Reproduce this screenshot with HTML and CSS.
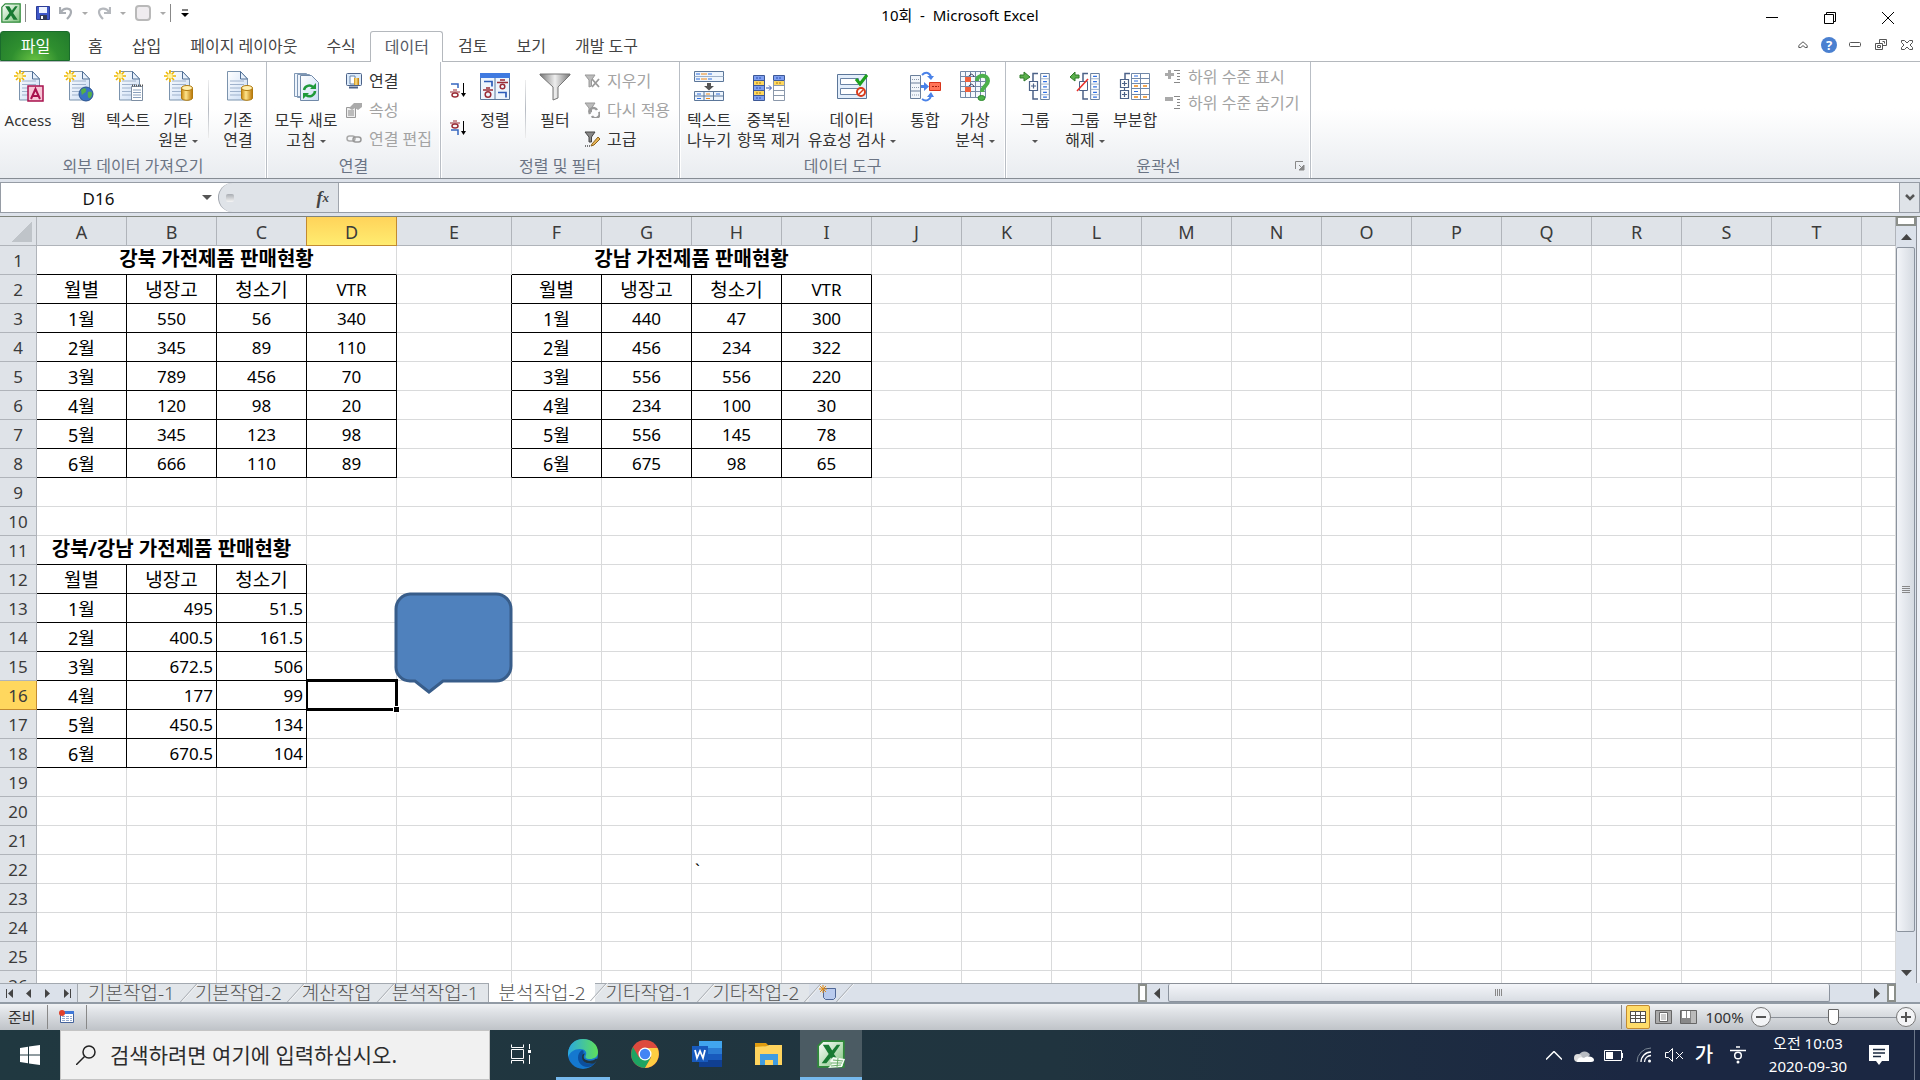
FILE: index.html
```html
<!DOCTYPE html>
<html lang="ko">
<head>
<meta charset="utf-8">
<title>10회 - Microsoft Excel</title>
<link rel="stylesheet" href="styles.css">
</head>
<body>
<svg class="defs" aria-hidden="true">
  <defs>
    <linearGradient id="paper" x1="0" y1="0" x2="1" y2="1"><stop offset="0" stop-color="#fff"/><stop offset="1" stop-color="#c9dcf5"/></linearGradient>
    <linearGradient id="gold" x1="0" x2="1"><stop offset="0" stop-color="#c8860c"/><stop offset=".4" stop-color="#ffe48a"/><stop offset="1" stop-color="#b87404"/></linearGradient>
    <linearGradient id="metal" x1="0" x2="1"><stop offset="0" stop-color="#777"/><stop offset=".5" stop-color="#eee"/><stop offset="1" stop-color="#777"/></linearGradient>
    <linearGradient id="edgeTop" x1="0" x2="1"><stop offset="0" stop-color="#2aa8e0"/><stop offset="1" stop-color="#5fe05a"/></linearGradient>
    <linearGradient id="xl" x1="0" y1="0" x2="1" y2="1"><stop offset="0" stop-color="#fff"/><stop offset="1" stop-color="#7fc27d"/></linearGradient>
    <symbol id="page" viewBox="0 0 32 32"><path d="M7.500 1.500h13l7 7.500v21h-20z" fill="url(#paper)" stroke="#7b93ad"/><path d="M20.500 1.500v7.500h7z" fill="#e8f1fc" stroke="#506f95"/><path d="M10 11h14M10 14.500h14M10 18h14M10 21.500h14M10 25h14" stroke="#9fb2cc"/></symbol>
    <symbol id="spark" viewBox="0 0 12 12"><path d="M6 0v12M0 6h12M2 2l8 8M10 2l-8 8" stroke="#f0b800" stroke-width="1.600"/><circle cx="6" cy="6" r="2.500" fill="#fff3a0"/></symbol>
    <symbol id="drum" viewBox="0 0 12 16"><path d="M.5 3v10c0 3 11 3 11 0V3z" fill="url(#gold)" stroke="#b07a10"/><ellipse cx="6" cy="3" rx="5.500" ry="2.500" fill="#ffefb0" stroke="#b07a10"/></symbol>
    <symbol id="list" viewBox="0 0 10 28"><path d="M.5.5h9v27h-9z" fill="#fff" stroke="#5f7899"/><path d="M.5 6h9M.5 11.500h9M.5 17h9M.5 22.500h9" stroke="#9db0c8"/><path d="M3 3.500h4M3 9h4M3 14.500h4M3 20h4M3 25h4" stroke="#2f6fe0" stroke-width="1.300"/></symbol>
    <symbol id="excel" viewBox="0 0 24 24"><path d="M5 1h18v22H1V5z" fill="url(#xl)" stroke="#2f8a3a" stroke-width="1.500"/><path d="M5 4l5 0 3 5 4-5h3l-5.500 8L20 20h-5l-3-5-4 5H4l6-8z" fill="#187a32"/></symbol>
  </defs>
</svg>

<header class="titlebar">
  <div class="quick">
    <svg class="i20" aria-hidden="true"><use href="#excel"/></svg>
    <span class="bar"></span>
    <button aria-label="저장"><svg width="14" height="14"><path d="M.5.5h13v13h-13z" fill="#3f58c8" stroke="#2c3c96"/><path d="M3 1h8v6H3z" fill="#eef3ff"/><path d="M4 9h7v5H4z" fill="#333a55"/><path d="M5 10h2v3H5z" fill="#fff"/></svg></button>
    <button class="dim" aria-label="실행 취소"><svg width="14" height="14"><path d="M1 1v6h6M2 6c3-5 10-4 10 0 0 3-2 5-4 7" fill="none" stroke="#a9adb3" stroke-width="2.200"/></svg><i class="caret"></i></button>
    <button class="dim" aria-label="다시 실행"><svg width="14" height="14"><path d="M13 1v6H7M12 6C9 1 2 2 2 6c0 3 2 5 4 7" fill="none" stroke="#b5b8bd" stroke-width="2.200"/></svg><i class="caret"></i></button>
    <button class="dim" aria-label="도형"><svg width="16" height="16"><rect x="1" y="1" width="14" height="14" rx="3" fill="#efecef" stroke="#b9b9b9" stroke-width="2"/></svg><i class="caret"></i></button>
    <span class="bar"></span>
    <button aria-label="사용자 지정"><svg width="8" height="8"><path d="M1 1h6" stroke="#000"/><path d="M0 4h8L4 8z"/></svg></button>
  </div>
  <h1>10회  -  Microsoft Excel</h1>
  <div class="winbtns">
    <button aria-label="최소화"><svg width="12" height="12"><path d="M0 5.500h12" stroke="#000"/></svg></button>
    <button aria-label="이전 크기로"><svg width="12" height="12"><path d="M.5 2.500h9v9h-9zM2.500 2.500v-2h9v9h-2" fill="none" stroke="#000"/></svg></button>
    <button aria-label="닫기"><svg width="12" height="12"><path d="M0 0l12 12M12 0L0 12" stroke="#000"/></svg></button>
  </div>
</header>

<nav class="tabs">
  <button class="file">파일</button>
  <button>홈</button><button>삽입</button><button>페이지 레이아웃</button><button>수식</button><button class="on">데이터</button><button>검토</button><button>보기</button><button>개발 도구</button>
  <div class="tabright">
    <button aria-label="리본 최소화"><svg width="10" height="8"><path d="M5 .8L.8 4.500v2h2L5 4.600l2.200 1.900h2v-2z" fill="none" stroke="#555"/></svg></button>
    <button class="help" aria-label="도움말">?</button>
    <button aria-label="창 최소화"><svg width="12" height="6"><rect x=".5" y=".5" width="11" height="4" rx="1" fill="none" stroke="#555"/></svg></button>
    <button aria-label="창 복원"><svg width="12" height="12"><path d="M.5 4.500h7v6h-7zM2.500 6.500h3v2h-3zM4.500 4.500v-4h7v6h-4M7.500 2.500h2v2" fill="none" stroke="#555"/></svg></button>
    <button aria-label="창 닫기"><svg width="12" height="10"><path d="M.5.5h3L6 3l2.500-2.500h3v2L9 5l2.500 2.500v2h-3L6 7 3.500 9.500h-3v-2L3 5 .5 2.500z" fill="none" stroke="#555"/></svg></button>
  </div>
</nav>

<section class="ribbon" aria-label="데이터">
  <div class="group">
    <div class="tools">
      <button class="big latin"><svg class="i32"><use href="#page" width="32" height="32"/><use href="#spark" x="2" width="12" height="12"/><rect x="16" y="16" width="15" height="15" fill="#f7c6d6" stroke="#a8104c" stroke-width="1.500"/><path d="M19 29l4.500-10L28 29M20.500 26h6" fill="none" stroke="#a8104c" stroke-width="2"/></svg><span>Access</span></button>
      <button class="big"><svg class="i32"><use href="#page" width="32" height="32"/><use href="#spark" x="2" width="12" height="12"/><circle cx="24" cy="24" r="7" fill="#3a72c4" stroke="#2b548e"/><path d="M19 20c3-3 6-2 5 1s-4 2-4 5zM26 22c4-2 5 2 3 5s-4 0-3-5z" fill="#55b047"/></svg><span>웹</span></button>
      <button class="big"><svg class="i32"><use href="#page" width="32" height="32"/><use href="#spark" x="2" width="12" height="12"/><path d="M19.500 16.500h11v14h-11z" fill="#fff" stroke="#7d8ea3"/><path d="M21 20h8M21 22.500h8M21 25h8M21 27.500h8" stroke="#8aa0bd"/><path d="M20 15.500h11" stroke="#555" stroke-dasharray="1 1" stroke-width="2"/></svg><span>텍스트</span></button>
      <button class="big"><svg class="i32"><use href="#page" width="32" height="32"/><use href="#spark" x="2" width="12" height="12"/><use href="#drum" x="19" y="15" width="12" height="16"/></svg><span>기타<br>원본 <i class="caret"></i></span></button>
      <span class="split"></span>
      <button class="big"><svg class="i32"><use href="#page" x="-2" width="32" height="32"/><use href="#drum" x="19" y="15" width="12" height="16"/></svg><span>기존<br>연결</span></button>
    </div>
    <h2>외부 데이터 가져오기</h2>
  </div>
  <div class="group">
    <div class="tools">
      <button class="big w72"><svg class="i32"><path d="M4.500 3.500h12v23h-12zM7.500 4.500h12v23h-12z" fill="#eef4fc" stroke="#8098b5"/><path d="M10.500 5.500h11l7 7v18h-18z" fill="url(#paper)" stroke="#7089a8"/><path d="M14 20a5.500 5.500 0 0 1 9-3M25 21a5.500 5.500 0 0 1-9 4" fill="none" stroke="#1f9a3a" stroke-width="2.500"/><path d="M26 13v6h-6zM13 29v-6h6z" fill="#1f9a3a"/></svg><span>모두 새로<br>고침 <i class="caret"></i></span></button>
      <div class="stack">
        <button class="small"><svg class="i16"><rect x=".5" y=".5" width="15" height="12" rx="1" fill="#dcebfb" stroke="#4c6288"/><path d="M4 3h5v8H4z" fill="#fff" stroke="#6784aa"/><rect x="8" y="5" width="5" height="7" fill="url(#gold)"/><path d="M3 14.500h9" stroke="#4c6288" stroke-width="2"/></svg>연결</button>
        <button class="small" disabled><svg class="i16"><path d="M.5 5.500h9v10h-9z" fill="#eee" stroke="#999"/><path d="M2 9h6M2 11h6M2 13h6" stroke="#888"/><path d="M3 6l5-5h8v4l-4 3-3-2-3 2z" fill="#aaa"/></svg>속성</button>
        <button class="small" disabled><svg class="i16"><rect x="1" y="5" width="8" height="5" rx="2.500" fill="none" stroke="#aaa" stroke-width="1.500"/><rect x="7" y="6" width="8" height="5" rx="2.500" fill="none" stroke="#999" stroke-width="1.500"/></svg>연결 편집</button>
      </div>
    </div>
    <h2>연결</h2>
  </div>
  <div class="group">
    <div class="tools">
      <div class="stack sorts">
        <button aria-label="오름차순 정렬"><svg class="i16"><path d="M1 2h7v4" fill="none" stroke="#3565c0" stroke-width="1.500"/><path d="M3 8h4M0 10h10" stroke="#9a2b35"/><ellipse cx="5" cy="13" rx="3" ry="2" fill="none" stroke="#9a2b35" stroke-width="1.500"/><path d="M13.500 1v12" stroke="#000"/><path d="M11 11h5l-2.500 4z"/></svg></button>
        <button aria-label="내림차순 정렬"><svg class="i16"><path d="M3 1h4M0 3h10" stroke="#9a2b35"/><ellipse cx="5" cy="6" rx="3" ry="2" fill="none" stroke="#9a2b35" stroke-width="1.500"/><path d="M1 10h7v5" fill="none" stroke="#3565c0" stroke-width="1.500"/><path d="M13.500 1v12" stroke="#000"/><path d="M11 11h5l-2.500 4z"/></svg></button>
      </div>
      <button class="big"><svg class="i32"><path d="M1.500 3.500h29v26h-29z" fill="#eef5fd" stroke="#5b7699"/><path d="M1 3h30v5H1z" fill="#3f7ae0"/><path d="M16 8v21" stroke="#5b7699"/><path d="M5 11.500h8v5M19 22.500h8v5" fill="none" stroke="#2d5cb8" stroke-width="1.700"/><path d="M7 18h4M4 20h10M21 10h5M18 12.500h11" stroke="#9a2b35" stroke-width="1.500"/><circle cx="9" cy="24.500" r="2.800" fill="none" stroke="#9a2b35" stroke-width="1.500"/><circle cx="23.500" cy="16.500" r="2.300" fill="none" stroke="#9a2b35" stroke-width="1.500"/></svg><span>정렬</span></button>
      <span class="split"></span>
      <button class="big"><svg class="i32"><path d="M1 4h30v1L19 17v11l-5 2V17L1 5z" fill="url(#metal)" stroke="#777"/></svg><span>필터</span></button>
      <div class="stack wide">
        <button class="small" disabled><svg class="i16"><path d="M1 2h10L7.500 7v6L5 14V7z" fill="#bbb" stroke="#999"/><path d="M8 6l7 8M15 6l-7 8" stroke="#999" stroke-width="1.800"/></svg>지우기</button>
        <button class="small" disabled><svg class="i16"><path d="M1 1h10L7.500 6v4H5V6z" fill="#bbb" stroke="#999"/><path d="M6 12a4 4 0 0 1 7-4M15 10a4 4 0 0 1-7 4" fill="none" stroke="#999" stroke-width="2.500"/></svg>다시 적용</button>
        <button class="small"><svg class="i16"><path d="M1 1h10L7.500 6v5H5V6z" fill="#888" stroke="#444"/><path d="M1 15h6" stroke="#000" stroke-dasharray="1 1"/><path d="M8 13l6-7 2 2-6 6-3 1z" fill="#e8b455" stroke="#8a6420"/></svg>고급</button>
      </div>
    </div>
    <h2>정렬 및 필터</h2>
  </div>
  <div class="group">
    <div class="tools spread">
      <button class="big"><svg class="i32"><path d="M1.500 1.500h29v10h-29z" fill="#eef5fd" stroke="#5b7699"/><path d="M1.500 6.500h29" stroke="#9db0c8"/><path d="M3 4h4M15 4h4M3 9h4M15 9h4" stroke="#2f6fe0"/><path d="M8 4h6M8 9h6" stroke="#f08a1a"/><path d="M14 13h4v3h3l-5 4.500-5-4.500h3z" fill="#555"/><path d="M1.500 21.500h29v9h-29zM11 21.500v9M20.500 21.500v9M1.500 26h29" fill="#eef5fd" stroke="#5b7699"/><path d="M4 24h4M4 28.500h4M23 24h4" stroke="#2f6fe0"/><path d="M13 24h4M13 28.500h4" stroke="#f08a1a"/></svg><span>텍스트<br>나누기</span></button>
      <button class="big w69"><svg class="i32"><path d="M.5 5.500h11v25H.5zM20.500 5.500h11v5h-11z" fill="#7f9ff0" stroke="#3c5896"/><path d="M1 11h10v4H1zM1 21h10v4H1zM21 11h10v4H21z" fill="#ffd75e"/><path d="M.5 10.500h11M.5 15.500h11M.5 20.500h11M.5 25.500h11" stroke="#3c5896"/><path d="M20.500 10.500v20h11v-20M20.500 15.500h11M20.500 20.500h11M20.500 25.500h11" fill="none" stroke="#8b98ab"/><path d="M3 8h6M3 18h6M3 28h6M23 8h6" stroke="#2b4fae" stroke-dasharray="2 1"/><path d="M3 13h6M3 23h6M23 13h6" stroke="#a87a10" stroke-dasharray="2 1"/><path d="M13 18h5M16 15.500l2.500 2.500-2.500 2.500" fill="none" stroke="#2b4fae"/></svg><span>중복된<br>항목 제거</span></button>
      <button class="big w97"><svg class="i32"><path d="M1.500 4.500h29v24h-29z" fill="#e3eefb" stroke="#5b7699"/><path d="M4.500 8.500h18v6h-18zM4.500 18.500h18v6h-18z" fill="#fff" stroke="#6a83a5"/><path d="M20 9l4 5 7-9" fill="none" stroke="#1ca01c" stroke-width="3"/><circle cx="25" cy="22" r="4" fill="#fff" stroke="#d83a1a" stroke-width="2"/><path d="M22.500 24.500l5-5" stroke="#d83a1a" stroke-width="1.500"/></svg><span>데이터<br>유효성 검사 <i class="caret"></i></span></button>
      <button class="big"><svg class="i32"><path d="M1.500 5.500h10v23h-10zM1.500 13h10M1.500 21h10" fill="#f2f6fb" stroke="#6a7f9b"/><path d="M3 9.500h7M3 17.500h7M3 25h7" stroke="#8b98ab" stroke-dasharray="1 1"/><path d="M12 15h3v-3l5 4.500-5 4.500v-3h-3z" fill="#4a82e8"/><path d="M13 5c4-4 8-2 9 2M13 29c4 3 8 1 9-3" fill="none" stroke="#4a82e8" stroke-width="2"/><path d="M18 6h7l-3 4zM18 27h7l-3-5z" fill="#4a82e8"/><path d="M20.500 12.500h11v8h-11z" fill="#ff7558" stroke="#d8341a"/><path d="M23 16.500h7" stroke="#a02010" stroke-dasharray="2 1"/></svg><span>통합</span></button>
      <button class="big"><svg class="i32"><path d="M1.500 1.500h25v26h-25zM6.500 1.500v26M11.500 1.500v26M16.500 1.500v26M21.500 1.500v26M1.500 6.500h25M1.500 11.500h25M1.500 16.500h25M1.500 21.500h25" fill="#f4f8fd" stroke="#7489a5"/><path d="M6 7h6v5H6zM6 17h6v5H6z" fill="#f0603c"/><path d="M10 6c2-3 4-2 5 1M10 16c2-3 4-2 5 1" fill="none" stroke="#335"/><path d="M18 11c0-7 11-7 11 0 0 5-6 5-6 11" fill="none" stroke="#4cb04c" stroke-width="4"/><ellipse cx="22.500" cy="28" rx="3.500" ry="2.500" fill="#4cb04c" stroke="#2a8a2a"/></svg><span>가상<br>분석 <i class="caret"></i></span></button>
    </div>
    <h2>데이터 도구</h2>
  </div>
  <div class="group">
    <div class="tools spread">
      <button class="big"><svg class="i32"><path d="M1 5h4V2l6 5-6 4V8H1z" fill="#5bb04c" stroke="#2f7a28"/><path d="M19 3.500h-5v8M14 20v9h5" fill="none" stroke="#4c6288" stroke-width="1.500"/><path d="M10.500 11.500h8v9h-8zM12 16h5M14.500 13.500v5" fill="#fff" stroke="#4c6288" stroke-width="1.200"/><use href="#list" x="21" y="3" width="10" height="27"/></svg><span>그룹<br><i class="caret"></i></span></button>
      <button class="big"><svg class="i32"><path d="M10 5H6V2L1 7l5 4V8h4z" fill="#5bb04c" stroke="#2f7a28"/><path d="M19 3.500h-5v8M14 20v9h5" fill="none" stroke="#4c6288" stroke-width="1.500"/><path d="M10.500 11.500h8v9h-8z" fill="#fff" stroke="#4c6288"/><path d="M8 21L19 9" stroke="#e8302a" stroke-width="1.600"/><use href="#list" x="21" y="3" width="10" height="27"/></svg><span>그룹<br>해제 <i class="caret"></i></span></button>
      <button class="big"><svg class="i32"><path d="M11 3.500H6v6" fill="none" stroke="#4c6288" stroke-width="1.500"/><path d="M1.500 9.500h8v8h-8zM1.500 20.500h8v8h-8zM3 13.500h5M5.500 11v5M3 24.500h5M5.500 22v5M5.500 17.500v3" fill="#fff" stroke="#4c6288" stroke-width="1.200"/><path d="M12.500 3.500h18v26h-18zM21.500 3.500v26M12.500 8.500h18M12.500 13.500h18M12.500 18.500h18M12.500 24.500h18" fill="#fff" stroke="#7188a8"/><path d="M15 6h4M15 11h4M15 21.500h4" stroke="#2f6fe0"/><path d="M15 16h4M24 16h4M15 27h4M24 27h4" stroke="#f08a1a" stroke-width="1.500"/></svg><span>부분합</span></button>
      <div class="stack tight">
        <button class="small" disabled><svg class="i16"><path d="M3 1h3v3h3v3H6v3H3V7H0V4h3z" fill="#aaa"/><path d="M9 1.500h6M12 4.500h3M12 7.500h3M12 10.500h3M9 13.500h6" stroke="#888"/></svg>하위 수준 표시</button>
        <button class="small" disabled><svg class="i16"><path d="M0 2h8v4H0z" fill="#aaa"/><path d="M9 1.500h6M12 4.500h3M12 7.500h3M12 10.500h3M9 13.500h6" stroke="#888"/></svg>하위 수준 숨기기</button>
      </div>
    </div>
    <h2>윤곽선</h2>
    <button class="launch" aria-label="윤곽선 설정"><svg width="10" height="10"><path d="M.5 8V.5H8" fill="none" stroke="#888"/><path d="M4 4l3 3M9 4v5H4z" fill="#888" stroke="#888"/></svg></button>
  </div>
</section>

<section class="formula">
  <div class="fbox">
    <input class="name" aria-label="이름 상자" value="D16">
    <button class="drop" aria-label="이름 목록"><i class="caret wide"></i></button>
    <div class="fxzone"><span class="knob"></span><button class="fx" aria-label="함수 삽입">f<sub>x</sub></button></div>
    <input class="fin" aria-label="수식 입력줄">
    <button class="expand" aria-label="수식 입력줄 확장"><svg width="10" height="7"><path d="M1 1l4 4 4-4" fill="none" stroke="#555" stroke-width="2.500"/></svg></button>
  </div>
</section>

<main class="work">
  <div class="sheet">
    <table>
      <colgroup><col class="rowcol"><col><col><col><col><col class="ecol"><col><col><col><col><col><col><col><col><col><col><col><col><col><col><col><col class="rest"></colgroup>
      <thead><tr><th class="corner"></th><th>A<th>B<th>C<th class="sel">D<th>E<th>F<th>G<th>H<th>I<th>J<th>K<th>L<th>M<th>N<th>O<th>P<th>Q<th>R<th>S<th>T<th></tr></thead>
      <tbody>
      <tr><th>1<td class="cap" colspan="4">강북 가전제품 판매현황<td><td class="cap" colspan="4">강남 가전제품 판매현황<td><td><td><td><td><td><td><td><td><td><td><td></tr>
      <tr class="head"><th>2<td class="b">월별<td class="b">냉장고<td class="b">청소기<td class="b l">VTR<td class="br"><td class="b">월별<td class="b">냉장고<td class="b">청소기<td class="b l">VTR<td><td><td><td><td><td><td><td><td><td><td><td></tr>
      <tr><th>3<td class="b m">1월<td class="b">550<td class="b">56<td class="b">340<td class="br"><td class="b m">1월<td class="b">440<td class="b">47<td class="b">300<td><td><td><td><td><td><td><td><td><td><td><td></tr>
      <tr><th>4<td class="b m">2월<td class="b">345<td class="b">89<td class="b">110<td class="br"><td class="b m">2월<td class="b">456<td class="b">234<td class="b">322<td><td><td><td><td><td><td><td><td><td><td><td></tr>
      <tr><th>5<td class="b m">3월<td class="b">789<td class="b">456<td class="b">70<td class="br"><td class="b m">3월<td class="b">556<td class="b">556<td class="b">220<td><td><td><td><td><td><td><td><td><td><td><td></tr>
      <tr><th>6<td class="b m">4월<td class="b">120<td class="b">98<td class="b">20<td class="br"><td class="b m">4월<td class="b">234<td class="b">100<td class="b">30<td><td><td><td><td><td><td><td><td><td><td><td></tr>
      <tr><th>7<td class="b m">5월<td class="b">345<td class="b">123<td class="b">98<td class="br"><td class="b m">5월<td class="b">556<td class="b">145<td class="b">78<td><td><td><td><td><td><td><td><td><td><td><td></tr>
      <tr><th>8<td class="b m">6월<td class="b">666<td class="b">110<td class="b">89<td class="br"><td class="b m">6월<td class="b">675<td class="b">98<td class="b">65<td><td><td><td><td><td><td><td><td><td><td><td></tr>
      <tr><th>9<td><td><td><td><td><td><td><td><td><td><td><td><td><td><td><td><td><td><td><td><td></tr>
      <tr><th>10<td><td><td><td><td><td><td><td><td><td><td><td><td><td><td><td><td><td><td><td><td></tr>
      <tr><th>11<td class="cap" colspan="3">강북/강남 가전제품 판매현황<td><td><td><td><td><td><td><td><td><td><td><td><td><td><td><td><td><td></tr>
      <tr class="head"><th>12<td class="b">월별<td class="b">냉장고<td class="b">청소기<td><td><td><td><td><td><td><td><td><td><td><td><td><td><td><td><td><td></tr>
      <tr><th>13<td class="b m">1월<td class="b r">495<td class="b r">51.5<td><td><td><td><td><td><td><td><td><td><td><td><td><td><td><td><td><td></tr>
      <tr><th>14<td class="b m">2월<td class="b r">400.5<td class="b r">161.5<td><td><td><td><td><td><td><td><td><td><td><td><td><td><td><td><td><td></tr>
      <tr><th>15<td class="b m">3월<td class="b r">672.5<td class="b r">506<td><td><td><td><td><td><td><td><td><td><td><td><td><td><td><td><td><td></tr>
      <tr><th class="sel">16<td class="b m">4월<td class="b r">177<td class="b r">99<td class="active"><td><td><td><td><td><td><td><td><td><td><td><td><td><td><td><td><td></tr>
      <tr><th>17<td class="b m">5월<td class="b r">450.5<td class="b r">134<td><td><td><td><td><td><td><td><td><td><td><td><td><td><td><td><td><td></tr>
      <tr><th>18<td class="b m">6월<td class="b r">670.5<td class="b r">104<td><td><td><td><td><td><td><td><td><td><td><td><td><td><td><td><td><td></tr>
      <tr><th>19<td><td><td><td><td><td><td><td><td><td><td><td><td><td><td><td><td><td><td><td><td></tr>
      <tr><th>20<td><td><td><td><td><td><td><td><td><td><td><td><td><td><td><td><td><td><td><td><td></tr>
      <tr><th>21<td><td><td><td><td><td><td><td><td><td><td><td><td><td><td><td><td><td><td><td><td></tr>
      <tr><th>22<td><td><td><td><td><td><td><td class="left">`<td><td><td><td><td><td><td><td><td><td><td><td><td></tr>
      <tr><th>23<td><td><td><td><td><td><td><td><td><td><td><td><td><td><td><td><td><td><td><td><td></tr>
      <tr><th>24<td><td><td><td><td><td><td><td><td><td><td><td><td><td><td><td><td><td><td><td><td></tr>
      <tr><th>25<td><td><td><td><td><td><td><td><td><td><td><td><td><td><td><td><td><td><td><td><td></tr>
      <tr><th>26<td><td><td><td><td><td><td><td><td><td><td><td><td><td><td><td><td><td><td><td><td></tr>
      </tbody>
    </table>
    <svg class="callout" width="120" height="104" aria-hidden="true"><path d="M16 2h86a15 15 0 0 1 15 15v57a15 15 0 0 1-15 15H49L35 100 21 89h-5A14 14 0 0 1 2 74V17A15 15 0 0 1 16 2z" fill="#4f81bd" stroke="#385d8a" stroke-width="3"/></svg>
  </div>
  <div class="vscroll">
    <span class="vsplit"></span>
    <button aria-label="위로"><svg width="11" height="6"><path d="M5.500 0L11 6H0z" fill="#444"/></svg></button>
    <div class="vthumb"><i></i><i></i><i></i><i></i></div>
    <div class="vrest"></div>
    <button aria-label="아래로"><svg width="11" height="6"><path d="M0 0h11L5.500 6z" fill="#444"/></svg></button>
  </div>
</main>

<div class="strip">
  <nav class="sheets">
    <div class="navs">
      <button aria-label="첫 시트"><svg width="8" height="9"><path d="M.5 0v9" stroke="#444"/><path d="M7 0v9L2 4.500z" fill="#444"/></svg></button>
      <button aria-label="이전 시트"><svg width="8" height="9"><path d="M6 0v9L1 4.500z" fill="#444"/></svg></button>
      <button aria-label="다음 시트"><svg width="8" height="9"><path d="M1 0v9l5-4.500z" fill="#444"/></svg></button>
      <button aria-label="마지막 시트"><svg width="8" height="9"><path d="M7.500 0v9" stroke="#444"/><path d="M1 0v9l5-4.500z" fill="#444"/></svg></button>
    </div>
    <button class="tab">기본작업-1</button><button class="tab">기본작업-2</button><button class="tab">계산작업</button><button class="tab before">분석작업-1</button><button class="tab now">분석작업-2</button><button class="tab">기타작업-1</button><button class="tab">기타작업-2</button>
    <button class="tab new" aria-label="워크시트 삽입"><svg width="18" height="16"><path d="M4.500 3.500h12v9l-2 2h-8l-2-2z" fill="#b9cbee" stroke="#4f6796"/><path d="M4 0v8M0 4h8M1 1l6 6M7 1L1 7" stroke="#e08a14"/></svg></button>
  </nav>
  <div class="hscroll">
    <span class="hsplit"></span>
    <button aria-label="왼쪽으로"><svg width="6" height="11"><path d="M6 0v11L0 5.500z" fill="#444"/></svg></button>
    <div class="hthumb"><i></i><i></i><i></i><i></i></div>
    <div class="hrest"></div>
    <button aria-label="오른쪽으로"><svg width="6" height="11"><path d="M0 0v11l6-5.500z" fill="#444"/></svg></button>
    <span class="hsplit"></span>
  </div>
</div>

<div class="status">
  <span class="ready">준비</span>
  <button class="macro" aria-label="매크로 기록"><svg width="16" height="14"><path d="M1.500 1.500h13v11h-13z" fill="#fff" stroke="#44639c"/><path d="M1 1h14v3H1z" fill="#3f78d8"/><path d="M3 6.500h10M3 8.500h10M3 10.500h10" stroke="#93a9cf" stroke-dasharray="3 1"/><circle cx="3" cy="3" r="3" fill="#e0402a"/></svg></button>
  <div class="views">
    <button class="on" aria-label="기본"><svg width="16" height="12"><path d="M0 0h16v12H0z" fill="#54504a"/><path d="M1 1h4v3H1zM6 1h4v3H6zM11 1h4v3h-4zM1 5h4v2H1zM6 5h4v2H6zM11 5h4v2h-4zM1 8h4v3H1zM6 8h4v3H6zM11 8h4v3h-4z" fill="#fff"/></svg></button>
    <button aria-label="페이지 레이아웃"><svg width="17" height="14"><path d="M.5.5h16v13H.5z" fill="#aaa" stroke="#666"/><path d="M4.500 2.500h8v9h-8z" fill="#fff" stroke="#666"/><path d="M6 5h5M6 7h5M6 9h5" stroke="#999"/></svg></button>
    <button aria-label="페이지 나누기"><svg width="17" height="14"><path d="M.5.5h16v13H.5z" fill="#888" stroke="#666"/><path d="M2 1h4v7H2zM7 1h3v7H7z" fill="#fff"/><path d="M11 1h5v12h-5z" fill="#bbb"/></svg></button>
  </div>
  <span class="pct">100%</span>
  <button class="round" aria-label="축소"><svg width="10" height="10"><path d="M0 5h10" stroke="#555" stroke-width="2"/></svg></button>
  <input class="zoom" type="range" min="0" max="100" value="50" aria-label="확대/축소">
  <button class="round" aria-label="확대"><svg width="10" height="10"><path d="M0 5h10M5 0v10" stroke="#555" stroke-width="2"/></svg></button>
</div>

<footer class="taskbar">
  <button class="start" aria-label="시작"><svg width="20" height="20"><path d="M0 3l8-1.200V9.500H0zM9 1.600L20 0v9.500H9zM0 10.500h8v7.700L0 17zM9 10.500h11V20L9 18.400z" fill="#fff"/></svg></button>
  <label class="search"><svg width="20" height="20"><circle cx="13" cy="7" r="6" fill="none" stroke="#222" stroke-width="1.500"/><path d="M8.500 11.500L0 20" stroke="#222" stroke-width="1.500"/></svg><input aria-label="검색" placeholder="검색하려면 여기에 입력하십시오."></label>
  <button class="app" aria-label="작업 보기"><svg width="20" height="20"><path d="M.5.500v3h12v-3M.5 5.500h12v9H.5zM.5 19.500v-3h12v3M18.500 0v5M18.500 11v9" fill="none" stroke="#fff"/><path d="M17 6h3v3h-3z" fill="#fff"/></svg></button>
  <button class="app run" aria-label="Edge"><svg width="30" height="30"><circle cx="15" cy="15" r="15" fill="#1478cf"/><path d="M0 14C1 5 7 0 15 0c9 0 15 6 15 13 0 5-4 7-8 7-5 0-5-2-4-4 1-3-1-6-6-6C6 10 2 13 0 18z" fill="url(#edgeTop)"/><path d="M14 11c-5 3-6 12 1 16 4 2 9 1 12-3-4 2-9 1-11-2-2-2-2-4-1-6 1-3 1-4-1-5z" fill="#0c4f9e"/><path d="M28 19.500c-2 2-5 2.500-8 2-5-1-5-4-3-7-2 0-3 1-3 4 0 4 5 7 12 6l4-4z" fill="#203440"/></svg></button>
  <button class="app" aria-label="Chrome"><svg width="28" height="28"><circle cx="14" cy="14" r="14" fill="#dd4b3e"/><path d="M2 7a14 14 0 0 0 12 21l6-10.500H8z" fill="#1da462"/><path d="M14 28A14 14 0 0 0 26.500 8H14l6 9.500z" fill="#ffcd42"/><circle cx="14" cy="14" r="6.500" fill="#fff"/><circle cx="14" cy="14" r="5.200" fill="#4285f4"/></svg></button>
  <button class="app" aria-label="Word"><svg width="30" height="26"><path d="M7 0h23v7H7z" fill="#41a5ee"/><path d="M7 7h23v6H7z" fill="#2b7cd3"/><path d="M7 13h23v6H7z" fill="#185abd"/><path d="M7 19h23v7H7z" fill="#103f91"/><path d="M0 5h16v16H0z" fill="#185abd"/><path d="M3 9l2 8 3-7 3 7 2-8" fill="none" stroke="#fff" stroke-width="1.800"/></svg></button>
  <button class="app" aria-label="파일 탐색기"><svg width="28" height="24"><path d="M0 1h11l3 3h-3L0 9z" fill="#e09c10"/><path d="M0 5l12-1 2-1h13v20H0z" fill="#ffd45e"/><path d="M5 23V12h18v11h-5v-5h-8v5z" fill="#3f9be0"/></svg></button>
  <button class="app run now" aria-label="Excel"><svg width="28" height="28"><use href="#excel" width="28" height="28"/><path d="M16 17l12 2-3 8-14 1 4-4-2-3z" fill="#f4fbf4"/><path d="M16 20l10 1M14 23l11 0M14 26l10-1M21 18l-1 9" stroke="#6aac6a"/></svg></button>
  <div class="tray">
    <button aria-label="숨겨진 아이콘"><svg width="16" height="9"><path d="M0 8.500l8-8 8 8" fill="none" stroke="#fff" stroke-width="1.500"/></svg></button>
    <button aria-label="OneDrive"><svg width="20" height="13"><path d="M5 6a6 6 0 0 1 11 0l-6 6z" fill="#b8bcc2"/><circle cx="4" cy="9" r="4" fill="#ddd"/><path d="M3 13c0-4 4-6 7-4 4-3 10-1 10 2 0 1-1 2-3 2z" fill="#fff"/></svg></button>
    <button aria-label="배터리"><svg width="20" height="11"><path d="M.5.500h17v10H.5zM18.500 3v5" fill="none" stroke="#fff"/><path d="M2 2h7v7H2z" fill="#fff"/></svg></button>
    <button aria-label="네트워크"><svg width="16" height="16"><path d="M1 15A14 14 0 0 1 15 1" fill="none" stroke="#7b8794"/><path d="M5 15A10 10 0 0 1 15 5M8.500 15A6.500 6.500 0 0 1 15 8.500" fill="none" stroke="#fff" stroke-width="1.300"/><circle cx="13.500" cy="14" r="1.500" fill="#fff"/></svg></button>
    <button aria-label="음소거"><svg width="19" height="14"><path d="M.5 4.500h3l4-4v13l-4-4h-3zM11 4l7 7M18 4l-7 7" fill="none" stroke="#fff"/></svg></button>
    <button class="ime">가</button>
    <button class="hanja" aria-label="한글"><svg width="16" height="18"><path d="M6 1h4M0 4.500h16" stroke="#fff" stroke-width="1.600"/><circle cx="8" cy="9.500" r="3.300" fill="none" stroke="#fff" stroke-width="1.500"/><circle cx="8" cy="16" r="1.500" fill="#fff"/></svg></button>
    <button class="clock"><span>오전 10:03</span><span>2020-09-30</span></button>
    <button class="note" aria-label="알림"><svg width="20" height="20"><path d="M0 0h20v16h-7l-3 4-3-4H0z" fill="#fff"/><path d="M4 4.500h12M4 8h12M4 11.500h8" stroke="#1b2a40" stroke-width="1.300"/></svg></button>
  </div>
</footer>
</body>
</html>
```
FILE: styles.css
```css
* { box-sizing: border-box; }
body {
  margin: 0;
  height: 100vh;
  display: flex;
  flex-direction: column;
  overflow: hidden;
  background: #fff;
  color: #333;
  font: 16px/20px "Noto Sans", "Noto Sans CJK KR", sans-serif;
}
button, input {
  font: inherit;
  color: inherit;
  border: 0;
  padding: 0;
  margin: 0;
  background: none;
}
button { display: flex; align-items: center; justify-content: center; white-space: nowrap; }
svg { display: block; flex: none; }
.defs { position: absolute; width: 0; height: 0; }
.i16 { width: 16px; height: 16px; }
.i20 { width: 20px; height: 20px; }
.i32 { width: 32px; height: 32px; }
.caret {
  display: inline-block;
  border: 3px solid transparent;
  border-top-color: #555;
  border-bottom: 0;
  vertical-align: middle;
}
.caret.wide { border-width: 5px 5px 0; }

/* title bar */
.titlebar { display: grid; grid-template-columns: 1fr auto 1fr; height: 31px; flex: none; }
.quick { display: flex; align-items: center; height: 26px; padding-left: 1px; gap: 9px; }
.quick .bar { width: 1px; height: 18px; background: #888; margin-left: -5px; }
.quick button { gap: 8px; }
.quick .dim { gap: 9px; }
.quick .dim .caret { border-top-color: #aaa; }
.quick .bar + button { margin-left: 1px; }
.titlebar h1 { margin: 0; font-size: 15px; line-height: 31px; font-weight: 400; color: #000; white-space: pre; }
.winbtns { display: flex; justify-content: flex-end; padding: 5px 3px 0 0; }
.winbtns button { width: 58px; }

/* ribbon tabs */
.tabs { display: flex; height: 31px; flex: none; border-bottom: 1px solid #b4b8bd; color: #444; }
.tabs > button { padding: 0 13px 1px 14px; border: 1px solid transparent; border-bottom: 0; }
.tabs > .file {
  width: 70px;
  margin-right: 3px;
  color: #fff;
  border: 1px solid #1a6b2c;
  border-radius: 3px 3px 0 0;
  background: radial-gradient(ellipse at 50% 110%, #6cc644, #2f8f2f 50%, #217a2c);
}
.tabs > .on { height: 31px; background: #fff; border-color: #b4b8bd; border-radius: 3px 3px 0 0; color: #555a66; }
.tabright { display: flex; margin-left: auto; align-items: center; padding-bottom: 2px; }
.tabright button { width: 26px; }
.tabright .help {
  width: 16px;
  height: 16px;
  margin: 0 5px;
  border-radius: 8px;
  background: #4a80d0;
  color: #fff;
  font-size: 13px;
  font-weight: 700;
}

/* ribbon */
.ribbon { display: flex; flex: none; height: 116px; background: linear-gradient(#fff 40%, #e9ecf0); }
.group {
  position: relative;
  display: flex;
  flex-direction: column;
  border-right: 1px solid #b9bec5;
  box-shadow: inset -1px 0 #fff, 1px 0 #fff;
  padding: 0 3px;
}
.group h2 { margin: 0; text-align: center; font-size: 16px; font-weight: 400; color: #6b7484; line-height: 20px; }
.tools { display: flex; height: 94px; }
.spread { padding: 0 2px 0 1px; }
.big { width: 50px; flex-direction: column; justify-content: flex-start; padding-top: 8px; gap: 8px; line-height: 20px; text-align: center; }
.big.latin { font-size: 15px; }
.w72 { width: 72px; }
.w69 { width: 69px; }
.w97 { width: 97px; }
.split { width: 1px; margin: 18px 4px 18px 5px; background: linear-gradient(#eee, #b5bac2, #eee); }
.stack { display: flex; flex-direction: column; padding: 4px 5px 0 4px; }
.stack.wide { padding-right: 6px; }
.stack.tight { padding: 2px 6px 0 5px; }
.small { height: 29px; gap: 7px; justify-content: flex-start; }
.tight .small { height: 26px; }
.small:disabled { color: #a3a3a3; }
.sorts { padding: 9px 4px 0 6px; }
.sorts button { height: 38px; }
.launch { position: absolute; right: 5px; bottom: 7px; }

/* formula bar */
.formula { flex: none; padding: 3px 0; background: #dde2ea; border-top: 1px solid #868c93; border-bottom: 1px solid #7f847c; }
.fbox { display: flex; height: 31px; border: 1px solid #969ca5; background: #fff; }
.name { width: 195px; padding-top: 2px; text-align: center; font-size: 17px; color: #111; }
.drop { width: 22px; }
.fxzone {
  display: flex;
  align-items: center;
  justify-content: space-between;
  width: 121px;
  padding: 0 9px 0 7px;
  background: #dfe3e8;
  border: 1px solid #a0a5ad;
  border-width: 0 1px;
  border-radius: 15px 0 0 15px;
}
.knob { width: 8px; height: 8px; border-radius: 2px; background: linear-gradient(#a9adb3, #f5f5f5); }
.fx { font: italic 700 18px/24px "Liberation Serif", serif; color: #444; }
.fx sub { font-size: 13px; line-height: 14px; }
.fin { flex: 1; min-width: 0; }
.expand { width: 20px; background: #dfe3e8; border-left: 1px solid #a0a5ad; }

/* worksheet */
.work { flex: 1; min-height: 0; display: flex; padding-right: 3px; background: #eceff5; }
.sheet { position: relative; flex: 1; min-width: 0; overflow: hidden; background: #fff; }
table { width: 100%; table-layout: fixed; border-spacing: 0; color: #000; font-size: 17px; line-height: 24px; }
col { width: 90px; }
.rowcol { width: 37px; }
.ecol { width: 115px; }
.rest { width: auto; }
th, td { height: 29px; padding: 1px 2px 0; border: 0 solid #d9dadb; border-width: 0 1px 1px 0; text-align: center; white-space: nowrap; }
th { font-weight: 400; background: #dfe3e8; color: #3b3b3b; border-color: #b0b4ba; }
thead th { font-size: 18px; }
th.sel { background: #ffd75e; border-color: #c28a30; }
thead .sel { background: linear-gradient(#ffd35a, #ffec70); box-shadow: -1px 0 #c28a30; }
.corner { background: linear-gradient(135deg, transparent 50%, #bfc4c9 50%) 12px 5px / 20px 20px no-repeat #dfe3e8; }
td.cap { font-size: 20px; font-weight: 700; vertical-align: top; border-bottom-color: #000; }
td.b { border-color: #000; }
td.br { border-right-color: #000; }
.head td { font-size: 19px; }
.head td.l { font-size: 17px; }
td.m { font-size: 18px; }
td.r { text-align: right; padding-right: 3px; }
td.left { text-align: left; padding-left: 3px; }
.active { position: relative; }
.active::before { content: ""; position: absolute; inset: -2px -2px -2px -1px; border: 3px solid #000; border-left-width: 2px; }
.active::after { content: ""; position: absolute; right: -3px; bottom: -3px; width: 5px; height: 5px; background: #000; outline: 1px solid #fff; }
.callout { position: absolute; left: 394px; top: 375px; }

/* scroll bars */
.vscroll { width: 21px; display: flex; flex-direction: column; background: #dbe1ea; border-right: 1px solid #8b9098; }
.vscroll button { height: 21px; }
.vsplit { height: 9px; background: #fff; border: 2px solid #8b8f8a; border-top-width: 1px; }
.vthumb { flex: 1; display: flex; flex-direction: column; align-items: center; justify-content: center; gap: 1px; background: linear-gradient(90deg, #f3f5f9, #d5dae1); border: 1px solid #8b939e; border-radius: 2px; margin-right: 1px; }
.vthumb i { width: 8px; height: 1px; background: #888; }
.vrest { height: 30px; }
.strip { display: flex; flex: none; height: 21px; background: #dbe1ea; border-bottom: 2px solid #929ba5; padding-right: 24px; }
.sheets { display: flex; flex: 1; min-width: 0; border-top: 1px solid #a3a9b0; }
.navs { display: flex; width: 78px; border-right: 1px solid #a3a9b0; }
.navs button { width: 19px; }
.tab { position: relative; padding: 0 10px; font-size: 19px; line-height: 18px; font-weight: 300; color: #555; background: #e2e6ea; }
.tab::after { content: ""; position: absolute; z-index: 2; right: -4px; top: 0; width: 1px; height: 18px; background: #a0a5ab; transform: skewX(-42deg); box-shadow: 1px 0 #fff; }
.tab.before::after { transform: none; right: 0; }
.tab.now { z-index: 1; background: #fff; margin-top: -1px; padding-top: 1px; }
.tab.new { width: 50px; justify-content: flex-start; background: none; }
.tab.new::after { right: 14px; }
.hscroll { display: flex; width: 40%; border-top: 1px solid #8b9098; }
.hscroll button { width: 21px; }
.hsplit { width: 9px; background: #fff; border: 2px solid #8b8f8a; }
.hthumb { flex: 1; display: flex; align-items: center; justify-content: center; gap: 1px; background: linear-gradient(#f3f5f9, #d9dde3); border: 1px solid #8b939e; border-top: 0; border-radius: 2px; }
.hthumb i { width: 1px; height: 7px; background: #888; }
.hrest { width: 36px; }

/* status bar */
.status { display: flex; flex: none; align-items: center; height: 26px; padding-right: 4px; background: linear-gradient(#f0f2f4, #dfe2e6 30%, #bfc3c8); font-size: 15px; }
.ready { width: 48px; padding-left: 8px; border-right: 1px solid #888; line-height: 24px; }
.macro { width: 39px; height: 24px; border-right: 1px solid #888; }
.views { display: flex; margin-left: auto; padding-left: 4px; border-left: 1px solid #888; height: 24px; gap: 1px; }
.views button { width: 24px; }
.views .on { background: #ffdc6a; border: 1px solid #c28a30; border-radius: 2px; }
.pct { width: 47px; text-align: center; margin: 0 3px 0 1px; }
.round { width: 20px; height: 20px; border: 1px solid #777; border-radius: 10px; background: #f3f4f6; }
.zoom { width: 125px; height: 20px; appearance: none; background: linear-gradient(#8b9098, #8b9098) center / 100% 1px no-repeat; }
.zoom::-webkit-slider-thumb { appearance: none; width: 11px; height: 16px; background: #fff; border: 1px solid #666; border-radius: 1px 1px 5px 5px; }

/* taskbar */
.taskbar { display: flex; flex: none; height: 50px; background: linear-gradient(90deg, #203840, #20343f 55%, #1b2742 85%); color: #fff; }
.start { width: 60px; }
.search { display: flex; align-items: center; gap: 14px; width: 430px; padding-left: 15px; background: #f1f1f1; border: 1px solid #c4c4c4; }
.search input { flex: 1; min-width: 0; font-size: 21px; line-height: 28px; }
.search input::placeholder { color: #2c2c2c; opacity: 1; }
.app { width: 62px; border-bottom: 3px solid transparent; padding-top: 1px; }
.app.run { border-image: linear-gradient(90deg, transparent 10%, #76b9ed 10% 90%, transparent 90%) 3; border-width: 0 0 3px; border-style: solid; }
.app.run.now { background: #4b5b63; border-image: none; border-bottom-color: #76b9ed; }
.tray { display: flex; margin-left: auto; padding-right: 5px; }
.tray button { width: 30px; }
.tray .ime { font-size: 20px; font-weight: 500; }
.tray .hanja { width: 38px; }
.tray .clock { width: 102px; flex-direction: column; font-size: 15px; line-height: 23px; }
.tray .note { width: 56px; padding-right: 15px; border-right: 1px solid #6b7688; }
```
